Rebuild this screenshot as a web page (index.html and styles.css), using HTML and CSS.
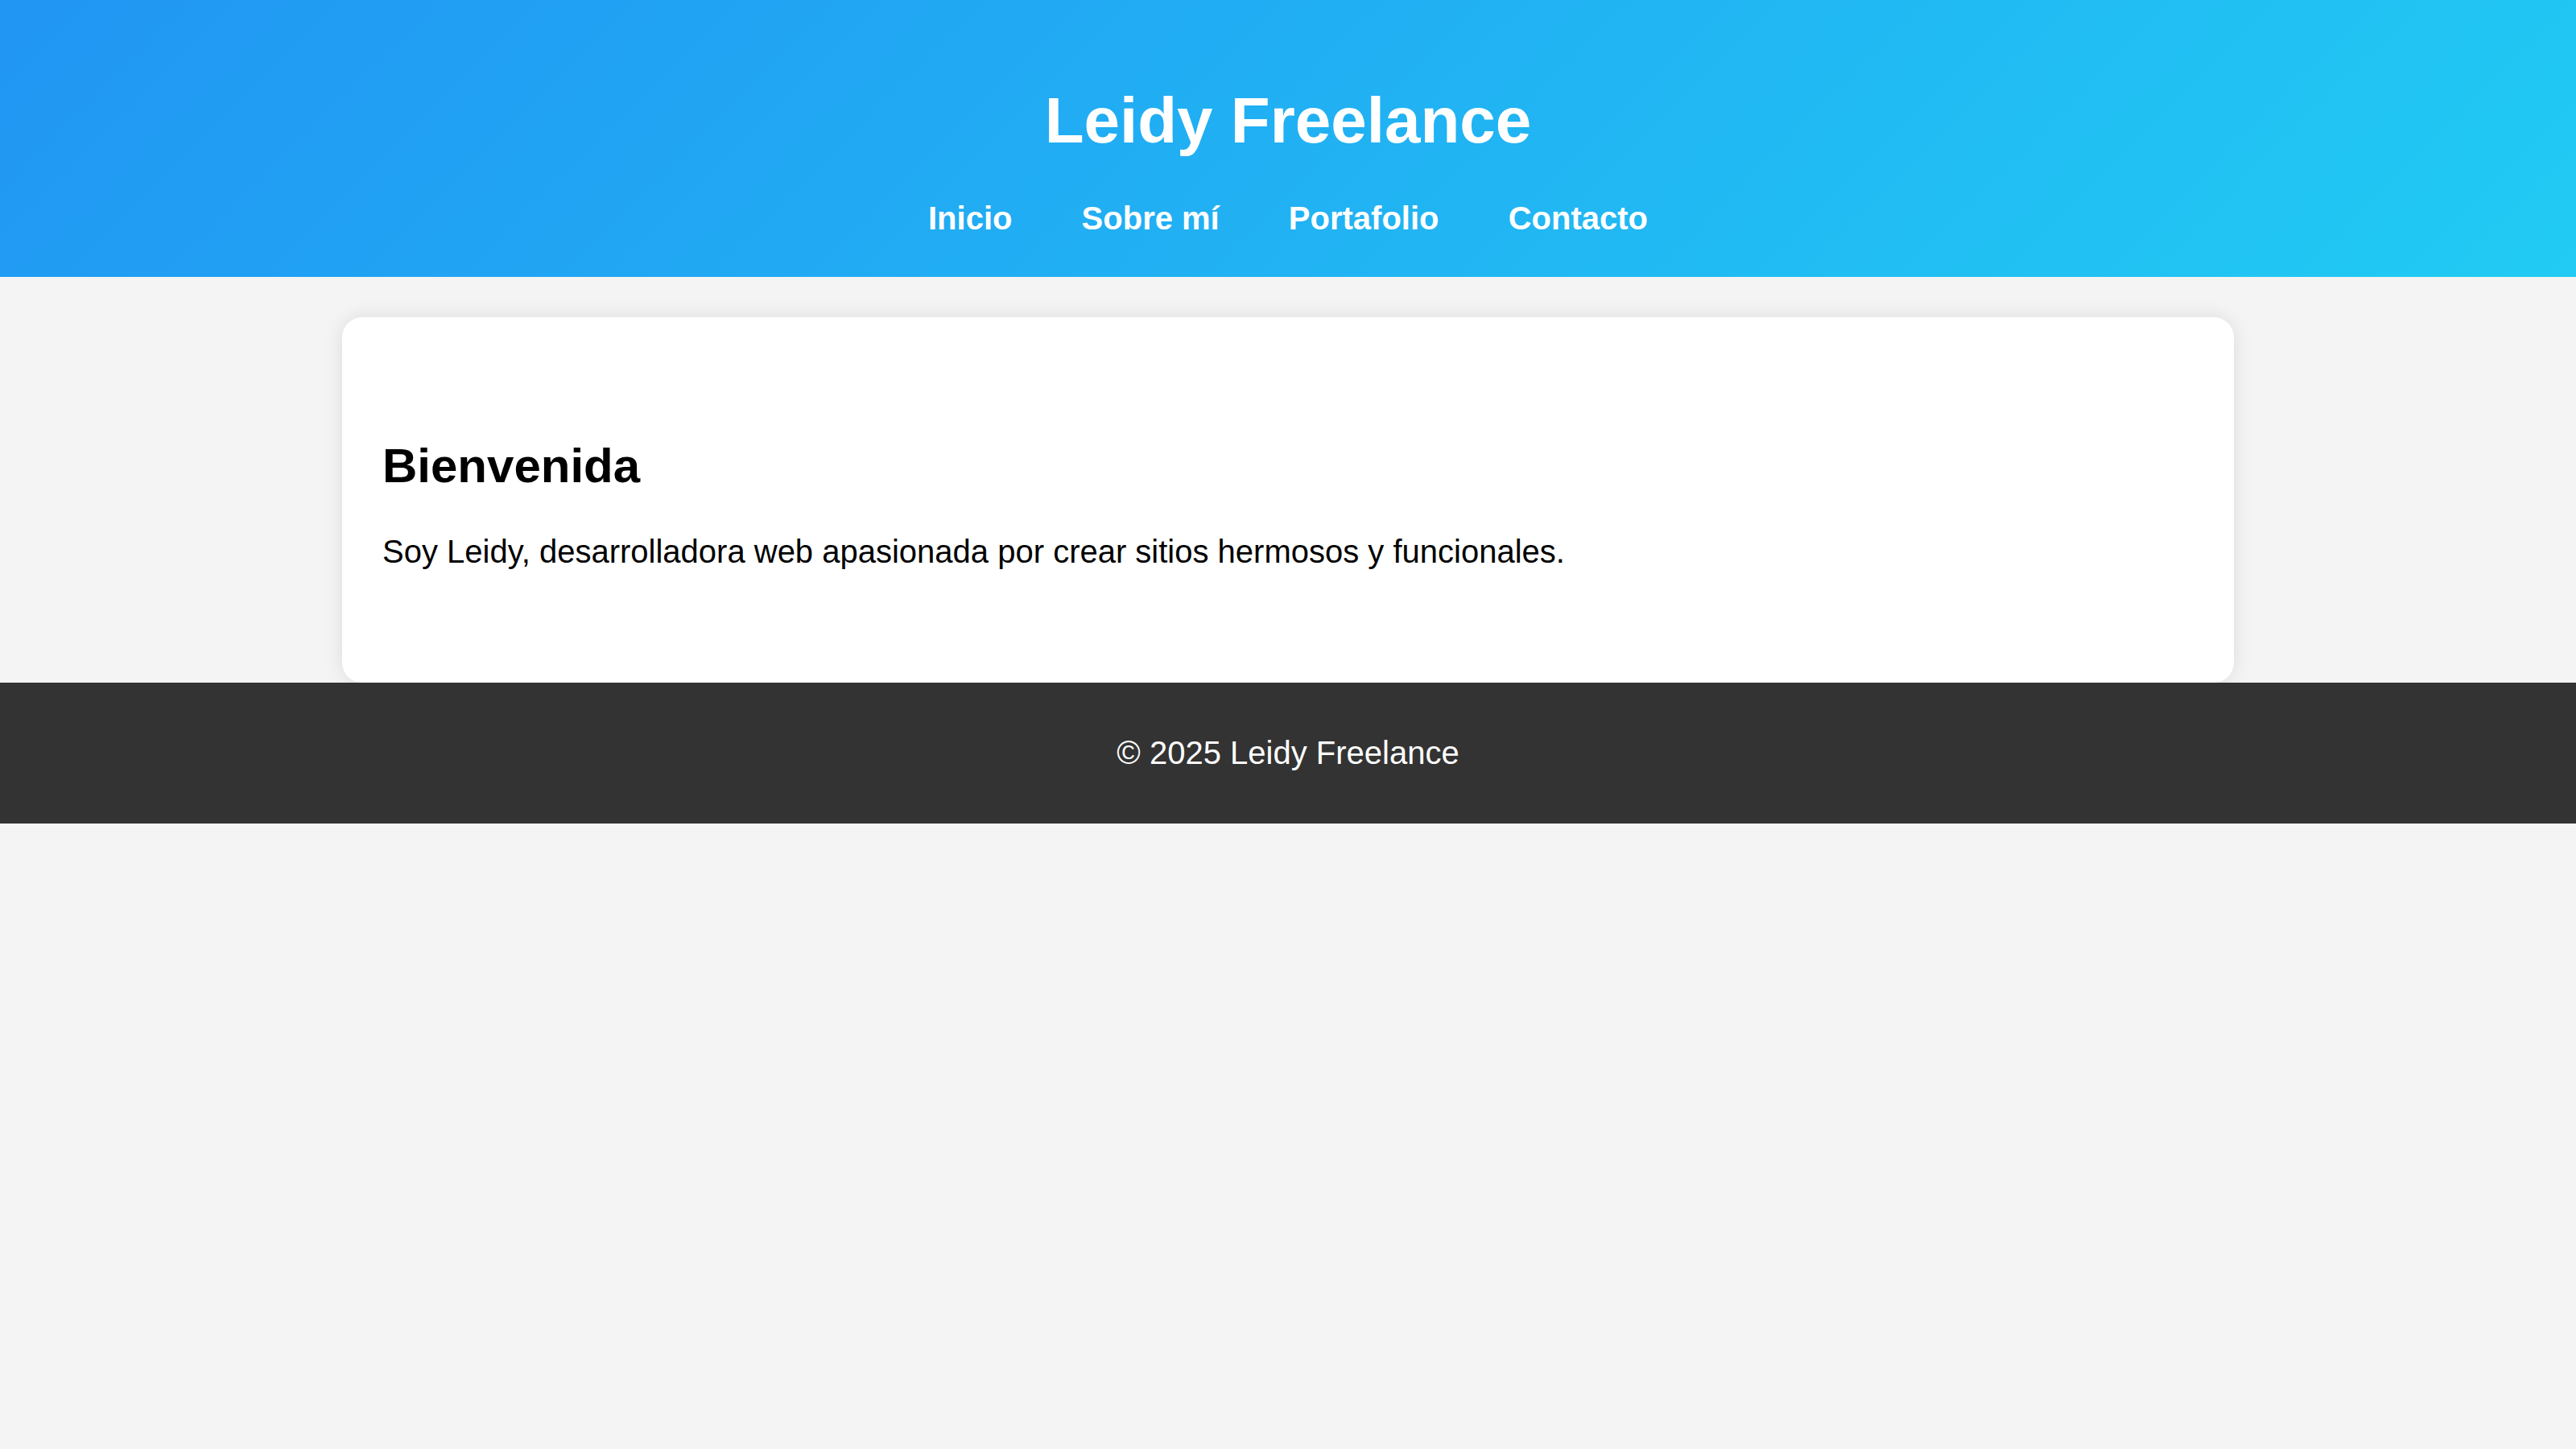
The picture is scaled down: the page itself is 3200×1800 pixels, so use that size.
FILE: index.html
```html
<!DOCTYPE html>
<html lang="es">
<head>
<meta charset="utf-8">
<title>Leidy Freelance</title>
<link rel="stylesheet" href="styles.css">
</head>
<body>
<header class="site-header">
  <h1 class="site-title">Leidy Freelance</h1>
  <nav class="site-nav">
    <a href="#inicio">Inicio</a>
    <a href="#sobre">Sobre mí</a>
    <a href="#portafolio">Portafolio</a>
    <a href="#contacto">Contacto</a>
  </nav>
</header>
<main class="card">
  <section class="welcome" id="inicio">
    <h2 class="welcome-title">Bienvenida</h2>
    <p class="welcome-text">Soy Leidy, desarrolladora web apasionada por crear sitios hermosos y funcionales.</p>
  </section>
</main>
<footer class="site-footer">
  <p class="footer-text">© 2025 Leidy Freelance</p>
</footer>
</body>
</html>
```
FILE: styles.css
```css
html, body {
  margin: 0;
  padding: 0;
}
body {
  font-family: "Liberation Sans", Arial, sans-serif;
  background: #f4f4f4;
  color: #000;
  font-size: 40px;
}
.site-header {
  background: linear-gradient(135deg, #2196f3, #21cbf3);
  color: #fff;
  text-align: center;
  padding: 50px 0;
}
.site-title {
  font-size: 80px;
  font-weight: bold;
  margin: 53.6px 0;
  line-height: normal;
}
.site-nav a {
  color: #fff;
  text-decoration: none;
  font-weight: bold;
  font-size: 40px;
  margin: 0 37.5px;
}
.card {
  display: block;
  max-width: 2250px;
  margin: 50px auto 0;
  padding: 50px;
  background: #fff;
  border-radius: 25px;
  box-shadow: 0 0 25px rgba(0, 0, 0, 0.1);
}
.welcome {
  padding: 50px 0;
}
.welcome-title {
  font-size: 60px;
  font-weight: bold;
  margin: 49.8px 0;
}
.welcome-text {
  margin: 40px 0;
  font-size: 40px;
}
.site-footer {
  background: #333;
  color: #fff;
  text-align: center;
  padding: 25px 0;
}
.footer-text {
  margin: 40px 0;
  font-size: 40px;
}
```
